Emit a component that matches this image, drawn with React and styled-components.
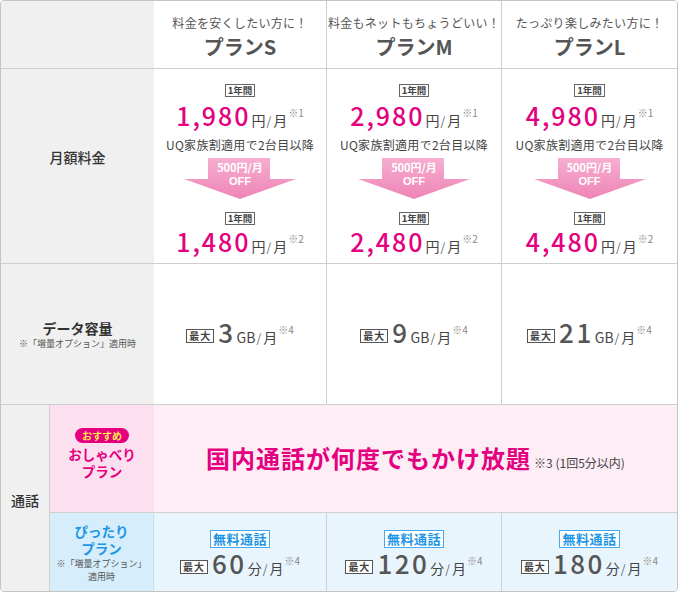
import React from 'react'
import styled, { createGlobalStyle } from 'styled-components'

const LINE = '#cfcfcf'
const PINK = '#e4007f'
const BLUE = '#1e96e6'

const GlobalStyle = createGlobalStyle`
  body {
    margin: 0;
    background: #fff;
    font-family: "Noto Sans CJK JP", "Noto Sans", sans-serif;
    color: #444;
  }
`

const Table = styled.div`
  display: grid;
  grid-template-columns: 49px 104px 173px 175px 175px;
  grid-template-rows: 68px 195px 141px 108px 78px;
  width: 678px;
  box-sizing: border-box;
  border: 1px solid #c4c4c4;
  border-radius: 4px;
  overflow: hidden;
`

const Cell = styled.div`
  box-sizing: border-box;
  display: flex;
  flex-direction: column;
  align-items: center;
  justify-content: ${p => (p.$top ? 'flex-start' : 'center')};
  padding-top: ${p => p.$pt || 0}px;
  padding-bottom: ${p => p.$pb || 0}px;
  background: ${p => p.$bg || '#fff'};
  border-right: ${p => (p.$noRight ? 'none' : `1px solid ${p.$line || LINE}`)};
  border-bottom: ${p => (p.$noBottom ? 'none' : `1px solid ${LINE}`)};
  grid-column: ${p => p.$col || 'auto'};
  grid-row: ${p => p.$row || 'auto'};
  text-align: center;
`

const Catch = styled.div`
  font-size: 12px;
  line-height: 18px;
  color: #555;
  white-space: nowrap;
  letter-spacing: 0.3px;
`

const PlanName = styled.div`
  margin-top: 2px;
  font-size: 20px;
  line-height: 26px;
  font-weight: 700;
  color: #555;
`

const RowLabel = styled.div`
  font-size: 14px;
  line-height: 18px;
  font-weight: ${p => (p.$bold ? 700 : 500)};
  color: #333;
`

const SubNote = styled.div`
  font-size: 9px;
  line-height: ${p => p.$lh || 12}px;
  color: #555;
  white-space: nowrap;
`

const YearTag = styled.div`
  box-sizing: border-box;
  height: 13px;
  padding: 0 2px;
  border: 1px solid #666;
  font-size: 9.5px;
  line-height: 11px;
  font-weight: 700;
  color: #444;
  background: #fff;
  margin-top: ${p => p.$mt || 0}px;
`

const PriceLine = styled.div`
  margin-top: ${p => p.$mt || 0}px;
  height: 28px;
  line-height: 28px;
  white-space: nowrap;
`

const PriceNum = styled.span`
  font-size: 25px;
  font-weight: 500;
  letter-spacing: 2px;
  color: ${PINK};
`

const BigNum = styled.span`
  font-size: 26px;
  font-weight: 500;
  letter-spacing: 2.5px;
  color: #555;
  margin-left: 4px;
`

const Unit = styled.span`
  font-size: 14px;
  color: #444;
  margin-left: 1px;
`

const Slash = styled.span`
  font-size: 12px;
  color: #666;
  margin: 0 1px;
`

const Note = styled.span`
  font-size: 10px;
  color: #888;
  vertical-align: 9px;
  margin-left: 1px;
`

const Family = styled.div`
  margin-top: 10px;
  font-size: 12px;
  line-height: 16px;
  color: #444;
  letter-spacing: 0.3px;
`

const ArrowBox = styled.div`
  position: relative;
  width: 112px;
  height: 41px;
  margin-top: 5px;

  svg {
    display: block;
  }
`

const ArrowText = styled.div`
  position: absolute;
  top: 2px;
  left: 0;
  right: 0;
  font-size: 11px;
  line-height: 14px;
  font-weight: 700;
  color: #fff;
`

const ArrowOff = styled.div`
  font-family: "Liberation Sans", Arial, sans-serif;
  font-size: 11px;
  line-height: 14px;
`

const ValueLine = styled.div`
  height: 30px;
  line-height: 30px;
  white-space: nowrap;
  margin-top: ${p => p.$mt || 0}px;
`

const MaxTag = styled.span`
  box-sizing: border-box;
  display: inline-block;
  height: 14px;
  padding: 0 2px;
  border: 1px solid #555;
  background: #fff;
  font-size: 10px;
  line-height: 12px;
  font-weight: 700;
  color: #444;
  letter-spacing: 1px;
  vertical-align: 3px;
`

const Badge = styled.div`
  height: 15px;
  padding: 0 7px;
  border-radius: 8px;
  background: ${PINK};
  color: #ffec4a;
  font-size: 10px;
  line-height: 15px;
  font-weight: 700;
  margin-bottom: 3px;
`

const PlanLabel = styled.div`
  font-size: 13.5px;
  line-height: 17px;
  font-weight: 700;
  color: ${p => p.$color};
`

const CallMain = styled.div`
  white-space: nowrap;
  margin-top: -2px;
`

const CallBig = styled.span`
  font-size: 24px;
  font-weight: 700;
  color: ${PINK};
  letter-spacing: 1px;
`

const CallNote = styled.span`
  font-size: 12px;
  color: #444;
  margin-left: 3px;
`

const FreeTag = styled.div`
  box-sizing: border-box;
  height: 18px;
  padding: 0 2px;
  border: 1px solid #45aaf2;
  background: #fff;
  color: ${BLUE};
  font-size: 13px;
  line-height: 16px;
  font-weight: 700;
  letter-spacing: 0.5px;
`

const plans = [
  { catch: '料金を安くしたい方に！', name: 'プランS', price: '1,980', after: '1,480', data: '3', call: '60' },
  { catch: '料金もネットもちょうどいい！', name: 'プランM', price: '2,980', after: '2,480', data: '9', call: '120' },
  { catch: 'たっぷり楽しみたい方に！', name: 'プランL', price: '4,980', after: '4,480', data: '21', call: '180' },
]

const PerMonth = ({ unit, note }) => (
  <>
    <Unit>{unit}</Unit>
    <Slash>/</Slash>
    <Unit>月</Unit>
    <Note>{note}</Note>
  </>
)

const Arrow = () => (
  <ArrowBox>
    <svg width="112" height="41" viewBox="0 0 112 41">
      <defs>
        <linearGradient id="arrowGrad" x1="0" y1="0" x2="0" y2="1">
          <stop offset="0" stopColor="#f6aed0" />
          <stop offset="1" stopColor="#ee84b6" />
        </linearGradient>
      </defs>
      <polygon points="24,0 86,0 86,21 112,21 56,41 0,21 24,21" fill="url(#arrowGrad)" />
    </svg>
    <ArrowText>
      <div>500円/月</div>
      <ArrowOff>OFF</ArrowOff>
    </ArrowText>
  </ArrowBox>
)

export default function App() {
  return (
    <>
      <GlobalStyle />
      <Table>
        <Cell $bg="#f0f0f0" $col="1 / 3" $noRight />
        {plans.map((p, i) => (
          <Cell key={p.name} $pt={4} $noRight={i === 2}>
            <Catch>{p.catch}</Catch>
            <PlanName>{p.name}</PlanName>
          </Cell>
        ))}

        <Cell $bg="#f0f0f0" $col="1 / 3" $noRight $pb={18}>
          <RowLabel>月額料金</RowLabel>
        </Cell>
        {plans.map((p, i) => (
          <Cell key={p.name} $top $pt={15} $noRight={i === 2}>
            <YearTag>1年間</YearTag>
            <PriceLine $mt={2}>
              <PriceNum>{p.price}</PriceNum>
              <PerMonth unit="円" note="※1" />
            </PriceLine>
            <Family>UQ家族割適用で2台目以降</Family>
            <Arrow />
            <YearTag $mt={13}>1年間</YearTag>
            <PriceLine>
              <PriceNum>{p.after}</PriceNum>
              <PerMonth unit="円" note="※2" />
            </PriceLine>
          </Cell>
        ))}

        <Cell $bg="#f0f0f0" $col="1 / 3" $noRight $pt={2}>
          <RowLabel $bold>データ容量</RowLabel>
          <SubNote $lh={14}>※「増量オプション」適用時</SubNote>
        </Cell>
        {plans.map((p, i) => (
          <Cell key={p.name} $noRight={i === 2} $pb={8}>
            <ValueLine>
              <MaxTag>最大</MaxTag>
              <BigNum>{p.data}</BigNum>
              <PerMonth unit="GB" note="※4" />
            </ValueLine>
          </Cell>
        ))}

        <Cell $bg="#f0f0f0" $row="4 / 6" $noBottom $pt={4}>
          <RowLabel>通話</RowLabel>
        </Cell>
        <Cell $bg="#fde0ef" $noRight $pb={10}>
          <Badge>おすすめ</Badge>
          <PlanLabel $color={PINK}>おしゃべり</PlanLabel>
          <PlanLabel $color={PINK}>プラン</PlanLabel>
        </Cell>
        <Cell $bg="#fdedf5" $col="3 / 6" $noRight>
          <CallMain>
            <CallBig>国内通話が何度でもかけ放題</CallBig>
            <CallNote>※3 (1回5分以内)</CallNote>
          </CallMain>
        </Cell>

        <Cell $bg="#d6edfc" $noBottom $line="#c9e0f0" $pt={2}>
          <PlanLabel $color={BLUE}>ぴったり</PlanLabel>
          <PlanLabel $color={BLUE}>プラン</PlanLabel>
          <SubNote $lh={13}>※「増量オプション」</SubNote>
          <SubNote $lh={13}>適用時</SubNote>
        </Cell>
        {plans.map((p, i) => (
          <Cell key={p.name} $bg="#e9f5fd" $noBottom $noRight={i === 2} $pt={2}>
            <FreeTag>無料通話</FreeTag>
            <ValueLine $mt={-2}>
              <MaxTag>最大</MaxTag>
              <BigNum>{p.call}</BigNum>
              <PerMonth unit="分" note="※4" />
            </ValueLine>
          </Cell>
        ))}
      </Table>
    </>
  )
}
